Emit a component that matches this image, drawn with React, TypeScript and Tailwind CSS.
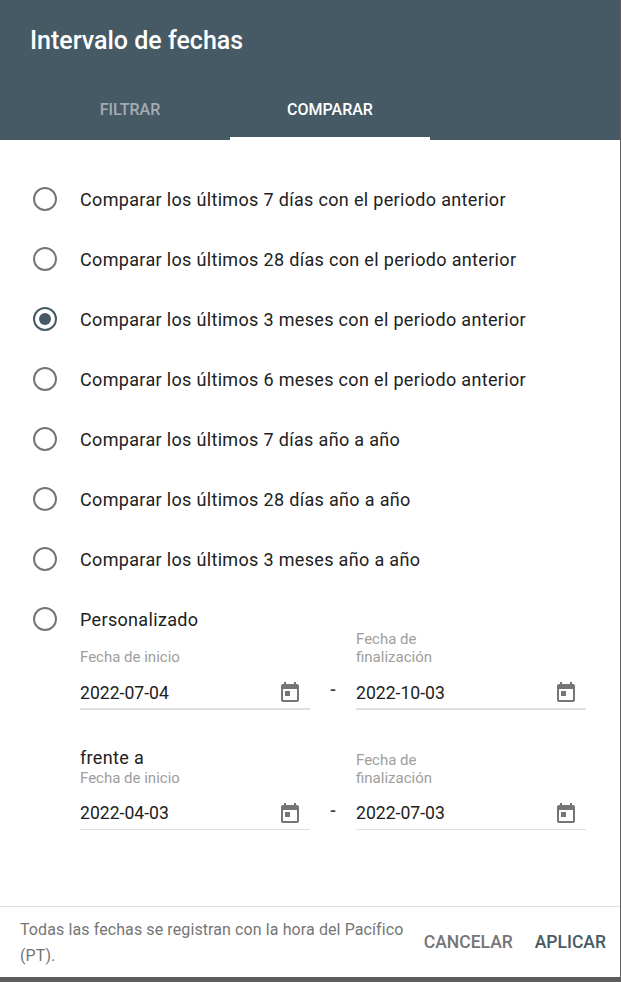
import React from "react";

const options = [
  "Comparar los últimos 7 días con el periodo anterior",
  "Comparar los últimos 28 días con el periodo anterior",
  "Comparar los últimos 3 meses con el periodo anterior",
  "Comparar los últimos 6 meses con el periodo anterior",
  "Comparar los últimos 7 días año a año",
  "Comparar los últimos 28 días año a año",
  "Comparar los últimos 3 meses año a año",
  "Personalizado",
];

function CalendarIcon() {
  return (
    <svg width="24" height="24" viewBox="0 0 24 24" fill="#757575">
      <path d="M19 3h-1V1h-2v2H8V1H6v2H5c-1.11 0-1.99.9-1.99 2L3 19c0 1.1.89 2 2 2h14c1.1 0 2-.9 2-2V5c0-1.1-.9-2-2-2zm0 16H5V8h14v11zM7 10h5v5H7z" />
    </svg>
  );
}

function Radio({ checked }: { checked: boolean }) {
  return (
    <div
      className={`flex h-6 w-6 items-center justify-center rounded-full border-2 ${
        checked ? "border-[#455a64]" : "border-[#757575]"
      }`}
    >
      {checked && <div className="h-3 w-3 rounded-full bg-[#455a64]" />}
    </div>
  );
}

function DateField({
  label,
  value,
  thick,
}: {
  label: React.ReactNode;
  value: string;
  thick?: boolean;
}) {
  return (
    <div className="flex w-[230px] flex-col">
      <div className="flex h-[36px] items-end text-[15px] leading-[18px] text-[#9e9e9e]">
        <span>{label}</span>
      </div>
      <div
        className={`flex items-center justify-between pr-[8px] ${
          thick
            ? "h-[44px] border-b-2 border-[#e0e0e0] pt-[12px]"
            : "h-[43px] border-b border-[#e0e0e0] pt-[11px]"
        }`}
      >
        <span className="text-[17.6px] text-[#212121]">{value}</span>
        <CalendarIcon />
      </div>
    </div>
  );
}

function DateRange({
  start,
  end,
  thick,
}: {
  start: string;
  end: string;
  thick?: boolean;
}) {
  return (
    <div className="flex">
      <DateField label="Fecha de inicio" value={start} thick={thick} />
      <div
        className={`flex w-[46px] items-end justify-center text-[17.6px] font-medium leading-[24px] text-[#424242] ${
          thick ? "pb-[8px]" : "pb-[7px]"
        }`}
      >
        <span>-</span>
      </div>
      <DateField
        label={
          <>
            Fecha de
            <br />
            finalización
          </>
        }
        value={end}
        thick={thick}
      />
    </div>
  );
}

export default function App() {
  return (
    <div
      className="h-[982px] w-[621px] overflow-hidden bg-[#5e5e5e]"
      style={{ fontFamily: "Roboto, sans-serif" }}
    >
      <div className="flex h-[977px] w-[620px] flex-col bg-white">
        {/* Header */}
        <div className="flex h-[140px] flex-col bg-[#465a65] pl-[30px]">
          <h1 className="mt-[25px] h-[32px] text-[25px] font-medium leading-[32px] text-white">
            Intervalo de fechas
          </h1>
          <div className="mt-auto flex">
            <div className="flex h-[60px] w-[200px] items-center justify-center text-[16px] font-medium text-white/50">
              FILTRAR
            </div>
            <div className="flex h-[60px] w-[200px] items-center justify-center border-b-[3px] border-white pt-[3px] text-[16px] font-medium text-white">
              COMPARAR
            </div>
          </div>
        </div>

        {/* Options */}
        <div className="flex-1 pl-[33px] pt-[29px]">
          {options.map((option, i) => (
            <div key={option} className="flex h-[60px] items-center">
              <Radio checked={i === 2} />
              <span className="ml-[23px] text-[18px] tracking-[0.33px] text-[#212121]">{option}</span>
            </div>
          ))}
          <div className="-mt-[19px] pl-[47px]">
            <DateRange start="2022-07-04" end="2022-10-03" thick />
            <div className="relative mt-[41px]">
              <span className="absolute left-0 top-[-5px] text-[18px] leading-[24px] tracking-[0.33px] text-[#212121]">
                frente a
              </span>
              <DateRange start="2022-04-03" end="2022-07-03" />
            </div>
          </div>
        </div>

        {/* Footer */}
        <div className="flex h-[71px] items-center border-t border-[#e0e0e0] pl-[20px] pr-[14px]">
          <p className="w-[392px] pt-[1px] text-[16px] leading-[26px] tracking-[0.1px] text-[#757575]">
            Todas las fechas se registran con la hora del Pacífico (PT).
          </p>
          <button className="ml-auto text-[17.5px] font-medium text-[#757575]">CANCELAR</button>
          <button className="ml-[22px] text-[17.5px] font-medium text-[#455a64]">APLICAR</button>
        </div>
      </div>
    </div>
  );
}
